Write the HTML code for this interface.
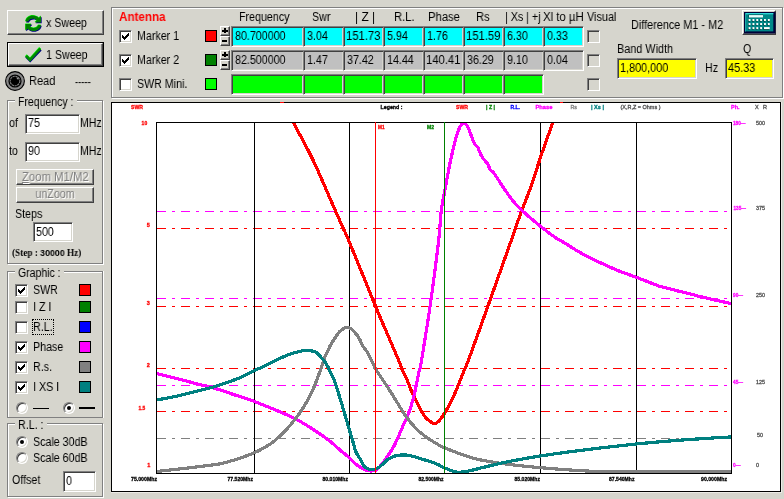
<!DOCTYPE html>
<html><head><meta charset="utf-8"><title>Antenna Analyzer</title>
<style>
html,body{margin:0;padding:0}
body{width:784px;height:499px;overflow:hidden;background:#d6d5cd;position:relative;
 font-family:"Liberation Sans",sans-serif;font-size:12px;color:#000;line-height:12px}
.a{position:absolute;white-space:nowrap}
.t{position:absolute;white-space:nowrap;transform:scaleX(.89);transform-origin:0 0;will-change:transform}
.tc{position:absolute;white-space:nowrap;text-align:center}
.tc span{display:inline-block;transform:scaleX(.89);transform-origin:50% 0;will-change:transform}
.btn{position:absolute;box-sizing:border-box;border:1px solid;border-color:#fff #404040 #404040 #fff;
 box-shadow:inset -1px -1px #808080, inset 1px 1px #d6d5cd;background:#d6d5cd}
.sunk{position:absolute;box-sizing:border-box;border:1px solid;border-color:#808080 #fff #fff #808080;
 box-shadow:inset 1px 1px #404040, inset -1px -1px #d6d5cd;background:#fff}
.grp{position:absolute;box-sizing:border-box;border:1px solid #808080;box-shadow:1px 1px #fff, inset 1px 1px #fff}
.gt{position:absolute;background:#d6d5cd;height:12px}
.cb{position:absolute;box-sizing:border-box;width:13px;height:13px;border:1px solid;border-color:#808080 #fff #fff #808080;
 box-shadow:inset 1px 1px #404040, inset -1px -1px #d6d5cd;background:#fff}
.cb.f{background:#d6d5cd}
.cb svg{position:absolute;left:2px;top:2px}
.sq{position:absolute;box-sizing:border-box;width:12px;height:12px;border:1px solid #000}
.rd{position:absolute;box-sizing:border-box;width:12px;height:12px;border-radius:50%;border:1px solid;border-color:#808080 #fff #fff #808080;background:#fff;box-shadow:inset 1px 1px #404040, inset -1px -1px #d6d5cd;transform:rotate(0deg)}
.rd.on:after{content:"";position:absolute;left:3px;top:3px;width:4px;height:4px;border-radius:50%;background:#000}
.cell{position:absolute;box-sizing:border-box;width:41px;height:21px;border:1px solid;border-color:#808080 #fff #fff #808080;
 box-shadow:inset 1px 1px #404040, inset -1px -1px #d6d5cd}
.c1{background:#00ffff}.c2{background:#c0c0c0}.c3{background:#00ff00}
.spin{position:absolute;box-sizing:border-box;width:10px;height:10px;border:1px solid;border-color:#fff #404040 #404040 #fff;background:#d6d5cd;box-shadow:inset -1px -1px #808080}
.spin i{position:absolute;background:#000}
</style></head><body>

<div class="btn" style="left:7px;top:10px;width:97px;height:25px"></div>
<svg class="a" style="left:25px;top:15px" width="18" height="18" viewBox="0 0 18 18"><g transform="translate(0.7,0.8)" fill="#000080"><path d="M0.5,6.6 C1,3 4,0.6 8,0.6 C10.4,0.6 12.4,1.5 13.8,2.9 L16,1.1 L16,7.5 L9.9,7.5 L11.8,5.3 C10.8,4.3 9.5,3.6 8,3.6 C5.6,3.6 3.9,4.8 3.3,6.6 Z"/><path transform="rotate(180 8.25 8.25)" d="M0.5,6.6 C1,3 4,0.6 8,0.6 C10.4,0.6 12.4,1.5 13.8,2.9 L16,1.1 L16,7.5 L9.9,7.5 L11.8,5.3 C10.8,4.3 9.5,3.6 8,3.6 C5.6,3.6 3.9,4.8 3.3,6.6 Z"/></g><g transform="translate(-0.3,-0.5)" fill="#00ff00"><path d="M0.5,6.6 C1,3 4,0.6 8,0.6 C10.4,0.6 12.4,1.5 13.8,2.9 L16,1.1 L16,7.5 L9.9,7.5 L11.8,5.3 C10.8,4.3 9.5,3.6 8,3.6 C5.6,3.6 3.9,4.8 3.3,6.6 Z"/><path transform="rotate(180 8.25 8.25)" d="M0.5,6.6 C1,3 4,0.6 8,0.6 C10.4,0.6 12.4,1.5 13.8,2.9 L16,1.1 L16,7.5 L9.9,7.5 L11.8,5.3 C10.8,4.3 9.5,3.6 8,3.6 C5.6,3.6 3.9,4.8 3.3,6.6 Z"/></g><g fill="#008000"><path d="M0.5,6.6 C1,3 4,0.6 8,0.6 C10.4,0.6 12.4,1.5 13.8,2.9 L16,1.1 L16,7.5 L9.9,7.5 L11.8,5.3 C10.8,4.3 9.5,3.6 8,3.6 C5.6,3.6 3.9,4.8 3.3,6.6 Z"/><path transform="rotate(180 8.25 8.25)" d="M0.5,6.6 C1,3 4,0.6 8,0.6 C10.4,0.6 12.4,1.5 13.8,2.9 L16,1.1 L16,7.5 L9.9,7.5 L11.8,5.3 C10.8,4.3 9.5,3.6 8,3.6 C5.6,3.6 3.9,4.8 3.3,6.6 Z"/></g></svg>
<div class="t" style="left:46.2px;top:17px;">x Sweep</div>
<div class="a" style="left:7px;top:42px;width:97px;height:25px;box-sizing:border-box;border:1px solid #000"></div>
<div class="btn" style="left:8px;top:43px;width:95px;height:23px"></div>
<svg class="a" style="left:23px;top:45px" width="20" height="19" viewBox="0 0 20 19" fill="none" stroke-linejoin="miter"><path d="M3.4,11.4 L7.2,15.3 L17.5,4.5" stroke="#000080" stroke-width="3.2"/><path d="M2.8,10.3 L6.9,14.3 L17.1,2.9" stroke="#00ff00" stroke-width="2.6"/><path d="M3.1,10.9 L7,14.8 L17.3,3.5" stroke="#008800" stroke-width="2.5"/></svg>
<div class="t" style="left:46.2px;top:49px;">1 Sweep</div>
<svg class="a" style="left:5px;top:71px" width="20" height="20" viewBox="0 0 20 20"><circle cx="10" cy="10" r="9.4" fill="#888" stroke="#000" stroke-width="1.1"/><circle cx="10" cy="10" r="6.6" fill="#000"/><circle cx="10" cy="10" r="4.8" fill="#000" stroke="#808080" stroke-width="1.1" stroke-dasharray="2.2,0.6"/><ellipse cx="12.6" cy="7.4" rx="1.3" ry="0.7" transform="rotate(40 12.6 7.4)" fill="#999"/></svg>
<div class="t" style="left:28.7px;top:75px;transform:scaleX(0.92);">Read</div>
<div class="t" style="left:74.5px;top:76px;transform:scaleX(0.78);">-----</div>
<div class="grp" style="left:7px;top:100px;width:96px;height:164px"></div>
<div class="gt" style="left:15px;top:95px;width:62px"></div>
<div class="t" style="left:18.2px;top:96px;transform:scaleX(0.875);">Frequency :</div>
<div class="t" style="left:9.2px;top:117px;">of</div>
<div class="sunk" style="left:25px;top:114px;width:55px;height:20px"></div>
<div class="t" style="left:28.2px;top:117px;">75</div>
<div class="t" style="left:79.9px;top:117px;transform:scaleX(0.875);">MHz</div>
<div class="t" style="left:9.2px;top:145px;">to</div>
<div class="sunk" style="left:25px;top:142px;width:55px;height:20px"></div>
<div class="t" style="left:28.2px;top:145px;">90</div>
<div class="t" style="left:79.9px;top:145px;transform:scaleX(0.875);">MHz</div>
<div class="btn" style="left:16px;top:169px;width:78px;height:16px"></div>
<div class="tc" style="left:16px;width:78px;top:172px;color:#fff;margin-left:1px"><span style="transform:scaleX(0.945)"><u>Z</u>oom M1/M2</span></div>
<div class="tc" style="left:16px;width:78px;top:171px;color:#808080"><span style="transform:scaleX(0.945)"><u>Z</u>oom M1/M2</span></div>
<div class="btn" style="left:16px;top:187px;width:78px;height:16px"></div>
<div class="tc" style="left:16px;width:78px;top:189px;color:#fff;margin-left:1px"><span>unZoom</span></div>
<div class="tc" style="left:16px;width:78px;top:188px;color:#808080"><span>unZoom</span></div>
<div class="t" style="left:14.7px;top:208px;">Steps</div>
<div class="sunk" style="left:33px;top:222px;width:40px;height:20px"></div>
<div class="t" style="left:36.2px;top:226px;">500</div>
<div class="t" style="left:11.5px;top:246.5px;font-family:'Liberation Serif',serif;font-weight:bold;font-size:10px;transform:scaleX(.92)">(Step : <span style="font-family:'Liberation Sans',sans-serif;font-size:9.6px">30000</span> Hz)</div>
<div class="grp" style="left:7px;top:271px;width:96px;height:147px;box-shadow:1px 0 #fff, inset 1px 1px #fff"></div>
<div class="gt" style="left:15px;top:266px;width:49px"></div>
<div class="t" style="left:18.2px;top:267px;transform:scaleX(0.875);">Graphic :</div>
<div class="cb" style="left:15px;top:284px"><svg width="7" height="7" viewBox="0 0 7 7" shape-rendering="crispEdges"><path d="M0,2h1v1h1v1h1v-1h1v-1h1v-1h1v-1h1v3h-1v1h-1v1h-1v1h-1v1h-1v-1h-1v-1h-1z" fill="#000"/></svg></div>
<div class="t" style="left:32.7px;top:284px;">SWR</div>
<div class="sq" style="left:79px;top:284px;background:#ff0000"></div>
<div class="cb" style="left:15px;top:301px"></div>
<div class="t" style="left:33.2px;top:301px;">I Z I</div>
<div class="sq" style="left:79px;top:301px;background:#008000"></div>
<div class="cb" style="left:15px;top:321px"></div>
<div class="t" style="left:33.2px;top:321px;">R.L.</div>
<div class="sq" style="left:79px;top:321px;background:#0000ff"></div>
<div class="cb" style="left:15px;top:341px"><svg width="7" height="7" viewBox="0 0 7 7" shape-rendering="crispEdges"><path d="M0,2h1v1h1v1h1v-1h1v-1h1v-1h1v-1h1v3h-1v1h-1v1h-1v1h-1v1h-1v-1h-1v-1h-1z" fill="#000"/></svg></div>
<div class="t" style="left:32.7px;top:341px;">Phase</div>
<div class="sq" style="left:79px;top:341px;background:#ff00ff"></div>
<div class="cb" style="left:15px;top:361px"><svg width="7" height="7" viewBox="0 0 7 7" shape-rendering="crispEdges"><path d="M0,2h1v1h1v1h1v-1h1v-1h1v-1h1v-1h1v3h-1v1h-1v1h-1v1h-1v1h-1v-1h-1v-1h-1z" fill="#000"/></svg></div>
<div class="t" style="left:32.7px;top:361px;">R.s.</div>
<div class="sq" style="left:79px;top:361px;background:#808080"></div>
<div class="cb" style="left:15px;top:381px"><svg width="7" height="7" viewBox="0 0 7 7" shape-rendering="crispEdges"><path d="M0,2h1v1h1v1h1v-1h1v-1h1v-1h1v-1h1v3h-1v1h-1v1h-1v1h-1v1h-1v-1h-1v-1h-1z" fill="#000"/></svg></div>
<div class="t" style="left:33.2px;top:381px;">I XS I</div>
<div class="sq" style="left:79px;top:381px;background:#008080"></div>
<div class="a" style="left:32px;top:319px;width:22px;height:16px;box-sizing:border-box;border:1px dotted #000"></div>
<div class="rd" style="left:16px;top:402px"></div>
<div class="a" style="left:33px;top:408px;width:16px;height:1px;background:#000"></div>
<div class="rd on" style="left:63px;top:402px"></div>
<div class="a" style="left:79px;top:407px;width:16px;height:2px;background:#000"></div>
<div class="grp" style="left:7px;top:423px;width:96px;height:74px"></div>
<div class="gt" style="left:15px;top:418px;width:32px"></div>
<div class="t" style="left:18.2px;top:419px;">R.L. :</div>
<div class="rd on" style="left:16px;top:436px"></div>
<div class="t" style="left:32.7px;top:436px;">Scale 30dB</div>
<div class="rd" style="left:16px;top:452px"></div>
<div class="t" style="left:32.7px;top:452px;">Scale 60dB</div>
<div class="t" style="left:11.7px;top:474px;">Offset</div>
<div class="sunk" style="left:63px;top:471px;width:33px;height:21px"></div>
<div class="t" style="left:66.2px;top:475px;">0</div>
<div class="grp" style="left:111px;top:7px;width:672px;height:91px"></div>
<div class="t" style="left:119px;top:11px;font-weight:bold;color:#ff0000;transform:scaleX(.97)">Antenna</div>
<div class="cb" style="left:119px;top:30px"><svg width="7" height="7" viewBox="0 0 7 7" shape-rendering="crispEdges"><path d="M0,2h1v1h1v1h1v-1h1v-1h1v-1h1v-1h1v3h-1v1h-1v1h-1v1h-1v1h-1v-1h-1v-1h-1z" fill="#000"/></svg></div>
<div class="t" style="left:136.7px;top:30px;">Marker 1</div>
<div class="cb" style="left:119px;top:54px"><svg width="7" height="7" viewBox="0 0 7 7" shape-rendering="crispEdges"><path d="M0,2h1v1h1v1h1v-1h1v-1h1v-1h1v-1h1v3h-1v1h-1v1h-1v1h-1v1h-1v-1h-1v-1h-1z" fill="#000"/></svg></div>
<div class="t" style="left:136.7px;top:54px;">Marker 2</div>
<div class="cb" style="left:119px;top:78px"></div>
<div class="t" style="left:136.7px;top:78px;">SWR Mini.</div>
<div class="sq" style="left:205px;top:30px;background:#ff0000"></div>
<div class="sq" style="left:205px;top:54px;background:#008000"></div>
<div class="sq" style="left:205px;top:78px;background:#00ff00"></div>
<div class="spin" style="left:220px;top:26px"><i style="left:1px;top:3px;width:6px;height:2px"></i><i style="left:3px;top:1px;width:2px;height:5px"></i></div>
<div class="spin" style="left:220px;top:36px"><i style="left:1px;top:3px;width:5px;height:2px"></i></div>
<div class="spin" style="left:220px;top:50px"><i style="left:1px;top:3px;width:6px;height:2px"></i><i style="left:3px;top:1px;width:2px;height:5px"></i></div>
<div class="spin" style="left:220px;top:60px"><i style="left:1px;top:3px;width:5px;height:2px"></i></div>
<div class="t" style="left:238.7px;top:11px;">Frequency</div>
<div class="t" style="left:312.2px;top:11px;">Swr</div>
<div class="t" style="left:354.8px;top:11px;transform:scaleX(1);">| Z |</div>
<div class="t" style="left:393.5px;top:11px;transform:scaleX(0.93);">R.L.</div>
<div class="t" style="left:427.7px;top:11px;transform:scaleX(0.94);">Phase</div>
<div class="t" style="left:475.5px;top:11px;transform:scaleX(0.93);">Rs</div>
<div class="t" style="left:505.2px;top:11px;">| Xs | +j</div>
<div class="t" style="left:543px;top:11px;transform:scaleX(0.95);">Xl to µH</div>
<div class="t" style="left:586.5px;top:11px;transform:scaleX(0.905);">Visual</div>
<div class="cell c1" style="left:231px;top:26px;width:73px"></div>
<div class="t" style="left:234.6px;top:30px;">80.700000</div>
<div class="cell c1" style="left:303px;top:26px"></div>
<div class="t" style="left:306.6px;top:30px;">3.04</div>
<div class="cell c1" style="left:343px;top:26px"></div>
<div class="t" style="left:345.8px;top:30px;transform:scaleX(0.94);">151.73</div>
<div class="cell c1" style="left:383px;top:26px"></div>
<div class="t" style="left:386.6px;top:30px;">5.94</div>
<div class="cell c1" style="left:423px;top:26px"></div>
<div class="t" style="left:426.6px;top:30px;">1.76</div>
<div class="cell c1" style="left:463px;top:26px"></div>
<div class="t" style="left:465.8px;top:30px;transform:scaleX(0.94);">151.59</div>
<div class="cell c1" style="left:503px;top:26px"></div>
<div class="t" style="left:506.6px;top:30px;">6.30</div>
<div class="cell c1" style="left:543px;top:26px"></div>
<div class="t" style="left:546.6px;top:30px;">0.33</div>
<div class="cell c2" style="left:231px;top:50px;width:73px"></div>
<div class="t" style="left:234.6px;top:54px;">82.500000</div>
<div class="cell c2" style="left:303px;top:50px"></div>
<div class="t" style="left:306.6px;top:54px;">1.47</div>
<div class="cell c2" style="left:343px;top:50px"></div>
<div class="t" style="left:346.6px;top:54px;">37.42</div>
<div class="cell c2" style="left:383px;top:50px"></div>
<div class="t" style="left:386.6px;top:54px;">14.44</div>
<div class="cell c2" style="left:423px;top:50px"></div>
<div class="t" style="left:425.8px;top:54px;transform:scaleX(0.94);">140.41</div>
<div class="cell c2" style="left:463px;top:50px"></div>
<div class="t" style="left:466.6px;top:54px;">36.29</div>
<div class="cell c2" style="left:503px;top:50px"></div>
<div class="t" style="left:506.6px;top:54px;">9.10</div>
<div class="cell c2" style="left:543px;top:50px"></div>
<div class="t" style="left:546.6px;top:54px;">0.04</div>
<div class="cell c3" style="left:231px;top:74px;width:73px"></div>
<div class="cell c3" style="left:303px;top:74px"></div>
<div class="cell c3" style="left:343px;top:74px"></div>
<div class="cell c3" style="left:383px;top:74px"></div>
<div class="cell c3" style="left:423px;top:74px"></div>
<div class="cell c3" style="left:463px;top:74px"></div>
<div class="cell c3" style="left:503px;top:74px"></div>
<div class="cb f" style="left:587px;top:30px"></div>
<div class="cb f" style="left:587px;top:54px"></div>
<div class="cb f" style="left:587px;top:78px"></div>
<div class="t" style="left:630.7px;top:19px;transform:scaleX(0.905);">Difference M1 - M2</div>
<div class="btn" style="left:742px;top:10px;width:34px;height:25px"></div>
<svg class="a" style="left:744px;top:12px" width="32" height="22" viewBox="0 0 32 22"><rect x="0" y="0" width="31.5" height="21.5" fill="#000038"/><rect x="1" y="1" width="28.3" height="18.4" fill="#008888"/><rect x="1" y="1" width="28.3" height="1.3" fill="#30d8d8"/><rect x="1" y="1" width="1" height="18.4" fill="#20a8a8"/><rect x="4.4" y="2.6" width="14.6" height="3" fill="#004848"/><rect x="5" y="3.1" width="14" height="2.4" fill="#e8ffff"/><rect x="4.00" y="7.60" width="1.9" height="2" fill="#003838"/><rect x="4.60" y="7.00" width="1.9" height="2" fill="#fff"/><rect x="7.85" y="7.60" width="1.9" height="2" fill="#003838"/><rect x="8.45" y="7.00" width="1.9" height="2" fill="#fff"/><rect x="11.70" y="7.60" width="1.9" height="2" fill="#003838"/><rect x="12.30" y="7.00" width="1.9" height="2" fill="#fff"/><rect x="15.55" y="7.60" width="1.9" height="2" fill="#003838"/><rect x="16.15" y="7.00" width="1.9" height="2" fill="#fff"/><rect x="19.40" y="7.60" width="1.9" height="2" fill="#003838"/><rect x="20.00" y="7.00" width="1.9" height="2" fill="#fff"/><rect x="23.25" y="7.60" width="1.9" height="2" fill="#003838"/><rect x="23.85" y="7.00" width="1.9" height="2" fill="#fff"/><rect x="4.00" y="11.65" width="1.9" height="2" fill="#003838"/><rect x="4.60" y="11.05" width="1.9" height="2" fill="#fff"/><rect x="7.85" y="11.65" width="1.9" height="2" fill="#003838"/><rect x="8.45" y="11.05" width="1.9" height="2" fill="#fff"/><rect x="11.70" y="11.65" width="1.9" height="2" fill="#003838"/><rect x="12.30" y="11.05" width="1.9" height="2" fill="#fff"/><rect x="15.55" y="11.65" width="1.9" height="2" fill="#003838"/><rect x="16.15" y="11.05" width="1.9" height="2" fill="#fff"/><rect x="19.40" y="11.65" width="1.9" height="2" fill="#003838"/><rect x="20.00" y="11.05" width="1.9" height="2" fill="#fff"/><rect x="23.25" y="11.65" width="1.9" height="2" fill="#003838"/><rect x="23.85" y="11.05" width="1.9" height="2" fill="#fff"/><rect x="4.00" y="15.70" width="1.9" height="2" fill="#003838"/><rect x="4.60" y="15.10" width="1.9" height="2" fill="#fff"/><rect x="7.85" y="15.70" width="1.9" height="2" fill="#003838"/><rect x="8.45" y="15.10" width="1.9" height="2" fill="#fff"/><rect x="11.70" y="15.70" width="1.9" height="2" fill="#003838"/><rect x="12.30" y="15.10" width="1.9" height="2" fill="#fff"/><rect x="15.55" y="15.70" width="1.9" height="2" fill="#003838"/><rect x="16.15" y="15.10" width="1.9" height="2" fill="#fff"/><rect x="19.40" y="15.70" width="5.7" height="2" fill="#003838"/><rect x="20.00" y="15.10" width="5.7" height="2" fill="#fff"/></svg>
<div class="t" style="left:617px;top:43px;transform:scaleX(0.905);">Band Width</div>
<div class="t" style="left:742.7px;top:43px;">Q</div>
<div class="sunk" style="left:617px;top:58px;width:80px;height:21px;background:#ffff00"></div>
<div class="t" style="left:620.2px;top:61.5px;transform:scaleX(0.905);">1,800,000</div>
<div class="t" style="left:705.2px;top:61.5px;">Hz</div>
<div class="sunk" style="left:725px;top:58px;width:49px;height:21px;background:#ffff00"></div>
<div class="t" style="left:728.2px;top:61.5px;transform:scaleX(0.91);">45.33</div>
<div class="a" style="left:111px;top:102px;width:671px;height:391px;background:#ecebe6"></div>
<div class="a" style="left:111px;top:102px;width:670px;height:390px;box-sizing:border-box;border:1px solid #000;background:#fff"></div>
<svg class="a" style="left:0;top:0" width="784" height="499" viewBox="0 0 784 499">
<defs><clipPath id="cp"><rect x="157" y="123" width="574" height="350"/></clipPath></defs>
<g shape-rendering="crispEdges" stroke-width="1" fill="none">
<g stroke="#ff00ff" stroke-dasharray="9,6,3,6"><path d="M157,211.5H731 M157,298.5H731 M157,385.5H731"/></g>
<g stroke="#ff0000" stroke-dasharray="9,6,3,6"><path d="M157,228.5H731 M157,306.5H731 M157,368.5H731 M157,411.5H731"/></g>
<g stroke="#808080" stroke-dasharray="9,6,3,6"><path d="M157,438.5H731"/></g>
</g>
<g shape-rendering="crispEdges" stroke-width="1" fill="none">
<rect x="156.5" y="122.5" width="575" height="351" stroke="#000"/>
<path d="M254.5,122V473 M349.5,122V473 M540.5,122V473 M636.5,122V473" stroke="#000"/>
</g>
<g clip-path="url(#cp)" shape-rendering="crispEdges">
<path d="M293.0,122.0 C296.3,128.3 305.9,145.2 313.0,160.0 C320.1,174.8 330.3,199.3 335.5,211.0 C340.7,222.7 341.8,225.2 344.0,230.0 C346.2,234.8 343.2,227.3 348.5,240.0 C353.8,252.7 369.1,290.6 375.6,306.4 C382.1,322.2 383.9,326.1 387.8,335.0 C391.6,343.9 396.1,354.2 398.5,360.0 C400.9,365.8 400.9,366.9 402.2,370.0 C403.6,373.1 405.1,375.4 406.6,378.8 C408.1,382.1 409.6,386.7 411.0,390.0 C412.4,393.3 413.8,395.8 415.2,398.8 C416.6,401.7 418.2,405.0 419.5,407.5 C420.8,410.0 422.0,412.0 423.1,413.8 C424.2,415.5 425.1,416.9 426.2,418.1 C427.4,419.4 429.0,420.4 430.0,421.2 C431.0,422.1 431.8,422.7 432.5,423.0 C433.2,423.3 433.8,423.3 434.4,423.3 C435.0,423.3 435.4,423.4 436.2,423.0 C437.1,422.6 438.4,421.7 439.4,420.6 C440.4,419.5 441.4,417.8 442.3,416.5 C443.2,415.2 443.5,414.8 444.6,413.0 C445.7,411.2 447.4,408.7 448.8,406.0 C450.2,403.3 451.9,400.1 453.3,397.0 C454.7,393.9 456.0,390.6 457.3,387.5 C458.6,384.4 459.8,381.6 461.0,378.5 C462.2,375.4 463.4,372.1 464.6,369.0 C465.9,365.9 464.2,371.5 468.5,360.0 C472.8,348.5 483.0,320.0 490.1,300.0 C497.2,280.0 506.2,254.8 511.4,240.0 C516.6,225.2 518.0,220.7 521.4,211.5 C524.8,202.3 528.1,194.8 531.5,185.0 C534.9,175.2 538.4,163.5 542.0,153.0 C545.6,142.5 551.2,127.2 553.0,122.0" fill="none" stroke="#ff0000" stroke-width="3.2" stroke-linejoin="round" stroke-linecap="round"/>
<path d="M156.5,373.6 C159.8,374.4 169.7,376.7 176.4,378.4 C183.1,380.1 190.7,382.2 196.8,383.8 C202.9,385.4 206.6,385.9 213.1,387.8 C219.6,389.7 228.7,392.9 235.6,395.2 C242.5,397.5 244.5,397.6 254.5,401.5 C264.5,405.4 283.6,412.9 295.4,418.9 C307.2,424.9 318.0,432.5 325.4,437.7 C332.8,442.9 336.3,446.9 340.0,450.0 C343.7,453.1 344.8,453.9 347.5,456.2 C350.2,458.6 353.3,462.1 356.2,464.4 C359.2,466.7 362.5,468.9 365.0,470.0 C367.5,471.1 369.4,470.9 371.2,470.9 C373.1,470.9 374.6,471.0 376.2,470.0 C377.9,469.0 379.6,467.0 381.2,465.0 C382.9,463.0 384.4,460.8 386.2,458.1 C388.1,455.4 390.6,452.0 392.5,448.8 C394.4,445.5 396.0,441.9 397.5,438.8 C399.0,435.6 400.0,432.9 401.2,430.0 C402.5,427.1 403.9,423.8 405.0,421.2 C406.1,418.8 406.9,417.5 407.9,415.0 C408.9,412.5 410.0,409.6 411.0,406.2 C412.0,402.9 413.2,398.8 414.1,395.0 C415.0,391.2 415.8,387.7 416.6,383.8 C417.4,379.8 418.3,375.2 419.1,371.2 C419.9,367.3 419.6,372.1 421.6,360.0 C423.6,347.9 428.4,318.4 431.2,298.4 C434.0,278.4 437.0,254.6 438.7,240.0 C440.4,225.4 440.3,218.5 441.2,211.0 C442.1,203.5 443.1,200.3 444.0,195.0 C444.9,189.7 445.9,184.6 446.9,179.2 C447.9,173.9 449.0,168.0 450.0,163.0 C451.0,158.0 452.1,153.6 453.1,149.2 C454.1,144.9 455.2,140.3 456.2,136.8 C457.3,133.2 458.5,130.1 459.4,128.0 C460.3,125.9 461.2,124.8 461.9,124.0 C462.6,123.2 462.7,122.8 463.5,123.0 C464.3,123.2 465.9,124.2 466.9,125.5 C467.9,126.8 468.5,128.2 469.4,130.5 C470.3,132.8 471.6,137.0 472.5,139.2 C473.4,141.5 474.1,142.8 475.0,144.2 C475.9,145.7 477.2,146.3 478.1,148.0 C479.0,149.7 479.8,152.5 480.6,154.2 C481.4,156.0 482.0,157.0 483.1,158.6 C484.2,160.2 486.4,161.8 487.5,163.6 C488.6,165.4 489.0,167.7 490.0,169.2 C491.0,170.8 492.5,171.4 493.8,173.0 C495.0,174.6 494.6,174.3 497.5,178.6 C500.4,182.9 507.4,193.8 511.4,199.0 C515.4,204.2 516.3,205.2 521.4,210.0 C526.5,214.8 536.2,222.8 542.0,227.5 C547.8,232.2 552.0,235.3 556.0,238.0 C560.0,240.7 562.8,241.7 566.2,243.8 C569.6,245.9 573.0,248.4 576.4,250.4 C579.8,252.4 583.2,254.2 586.6,256.0 C590.0,257.8 593.4,259.5 596.8,261.1 C600.2,262.7 603.6,264.2 607.0,265.7 C610.4,267.2 613.8,268.9 617.2,270.3 C620.6,271.7 624.2,272.9 627.4,274.1 C630.6,275.3 633.1,276.0 636.5,277.3 C639.9,278.6 644.1,280.3 648.0,281.8 C651.9,283.3 656.3,285.2 660.0,286.4 C663.7,287.6 666.7,288.0 670.0,288.9 C673.3,289.8 676.7,290.7 680.0,291.5 C683.3,292.3 686.8,293.0 690.0,293.8 C693.2,294.6 695.3,295.4 699.0,296.3 C702.7,297.2 707.0,298.2 712.4,299.4 C717.8,300.6 728.1,302.9 731.2,303.6" fill="none" stroke="#ff00ff" stroke-width="3.2" stroke-linejoin="round" stroke-linecap="round"/>
<path d="M156.5,471.5 C163.8,470.7 188.6,468.0 200.0,466.5 C211.4,465.0 216.1,465.0 225.2,462.7 C234.3,460.4 246.2,456.4 254.5,452.7 C262.9,448.9 268.5,445.8 275.3,440.2 C282.1,434.6 289.5,426.4 295.4,418.9 C301.2,411.4 306.3,402.9 310.4,395.0 C314.5,387.1 317.8,377.1 320.0,371.3 C322.2,365.5 322.5,363.3 323.8,360.0 C325.0,356.7 326.2,354.0 327.5,351.3 C328.8,348.6 329.8,346.3 331.2,343.8 C332.7,341.2 334.8,338.3 336.2,336.2 C337.7,334.2 338.8,332.5 340.0,331.2 C341.2,330.0 342.6,329.1 343.8,328.5 C344.9,327.9 345.6,327.5 346.9,327.5 C348.1,327.5 349.9,327.9 351.2,328.8 C352.6,329.6 353.6,330.8 355.0,332.5 C356.4,334.2 358.1,336.6 359.4,338.8 C360.6,340.9 361.1,343.3 362.5,345.6 C363.9,347.9 365.8,349.7 367.5,352.5 C369.2,355.3 371.0,359.6 372.5,362.5 C374.0,365.4 373.1,365.0 376.2,370.0 C379.4,375.0 386.3,385.1 391.1,392.6 C395.9,400.1 401.0,409.2 405.0,415.0 C409.0,420.8 411.7,424.0 415.0,427.5 C418.3,431.0 421.2,433.4 425.0,436.2 C428.8,439.1 434.6,442.5 437.8,444.4 C440.9,446.3 438.6,445.5 444.2,447.7 C449.8,449.9 462.6,455.2 471.3,457.7 C480.0,460.2 488.0,461.3 496.4,462.7 C504.8,464.1 513.8,464.9 521.4,465.8 C529.0,466.7 534.4,467.1 542.0,467.8 C549.6,468.5 558.7,469.2 567.0,469.8 C575.3,470.4 583.7,470.9 592.0,471.3 C600.3,471.7 593.8,471.9 617.0,472.0 C640.2,472.1 712.0,472.0 731.0,472.0" fill="none" stroke="#808080" stroke-width="3.2" stroke-linejoin="round" stroke-linecap="round"/>
<path d="M156.5,400.0 C159.8,399.4 169.7,397.7 176.4,396.2 C183.1,394.7 190.7,392.6 196.8,391.1 C202.9,389.6 206.6,389.0 213.1,387.0 C219.6,385.0 230.5,381.4 236.0,379.3 C241.5,377.2 243.1,376.1 246.2,374.7 C249.3,373.2 251.0,372.2 254.4,370.6 C257.8,369.0 262.9,366.8 266.6,365.0 C270.3,363.2 273.4,361.5 276.8,359.9 C280.2,358.3 283.6,356.6 287.0,355.3 C290.4,354.0 294.1,352.8 297.2,352.0 C300.3,351.2 302.3,350.5 305.4,350.5 C308.5,350.5 313.0,350.8 315.6,352.0 C318.2,353.2 319.5,355.5 321.2,357.5 C323.0,359.5 324.8,361.5 326.2,363.8 C327.7,366.0 328.5,367.9 330.0,371.2 C331.5,374.6 333.0,376.5 335.5,383.8 C338.0,391.1 342.7,407.3 345.0,415.0 C347.3,422.7 348.1,425.8 349.4,430.0 C350.6,434.2 351.5,436.5 352.5,440.0 C353.5,443.5 354.4,448.1 355.6,451.2 C356.9,454.4 358.6,456.4 360.0,458.8 C361.4,461.1 362.4,463.9 363.8,465.6 C365.1,467.3 366.4,468.1 368.1,468.8 C369.8,469.4 372.0,469.6 373.8,469.4 C375.5,469.2 377.1,468.6 378.8,467.5 C380.4,466.4 382.1,464.6 383.8,463.1 C385.4,461.6 386.9,459.9 388.8,458.8 C390.6,457.6 392.9,456.6 395.0,456.0 C397.1,455.4 399.2,455.1 401.2,455.0 C403.3,454.9 405.2,454.9 407.5,455.2 C409.8,455.6 412.1,456.1 415.0,456.9 C417.9,457.7 421.2,458.8 425.0,460.0 C428.8,461.2 434.6,463.1 437.8,464.4 C440.9,465.7 441.1,466.5 444.2,467.8 C447.3,469.1 452.6,471.4 456.3,472.0 C460.0,472.6 461.7,472.3 466.3,471.5 C470.9,470.7 476.7,469.0 483.8,467.3 C490.9,465.6 499.2,463.4 508.9,461.5 C518.6,459.6 528.1,457.8 542.0,455.7 C555.9,453.6 576.2,450.9 592.0,449.0 C607.8,447.1 621.8,445.5 636.5,444.0 C651.2,442.5 664.2,441.4 680.0,440.2 C695.8,439.0 722.7,437.4 731.2,436.9" fill="none" stroke="#008080" stroke-width="3.2" stroke-linejoin="round" stroke-linecap="round"/>

</g>
<g shape-rendering="crispEdges" stroke-width="1" fill="none">
<path d="M375.5,122V473" stroke="#ff0000"/>
<path d="M444.5,122V473" stroke="#008000"/>
</g>
<g stroke-width="0.3" font-family="Liberation Sans, sans-serif" font-size="5.5" font-weight="bold" lengthAdjust="spacingAndGlyphs">
<text x="131" y="109" fill="#ff0000" stroke="#ff0000" textLength="12" lengthAdjust="spacingAndGlyphs">SWR</text>
<text x="380.5" y="109" fill="#000" stroke="#000" textLength="22" lengthAdjust="spacingAndGlyphs">Legend :</text>
<text x="456" y="109" fill="#ff0000" stroke="#ff0000" textLength="12" lengthAdjust="spacingAndGlyphs">SWR</text>
<text x="486" y="109" fill="#008000" stroke="#008000" textLength="9" lengthAdjust="spacingAndGlyphs">| Z |</text>
<text x="510.5" y="109" fill="#0000ff" stroke="#0000ff" textLength="9.5" lengthAdjust="spacingAndGlyphs">R.L.</text>
<text x="535.5" y="109" fill="#ff00ff" stroke="#ff00ff" textLength="17" lengthAdjust="spacingAndGlyphs">Phase</text>
<text x="570.5" y="109" fill="#808080" stroke="#808080" font-weight="normal" textLength="6.5" lengthAdjust="spacingAndGlyphs">Rs</text>
<text x="591" y="109" fill="#008080" stroke="#008080" textLength="13" lengthAdjust="spacingAndGlyphs">| Xs |</text>
<text x="620.5" y="109" fill="#505050" stroke="#505050" font-weight="normal" textLength="40" lengthAdjust="spacingAndGlyphs">(X,R,Z = Ohms )</text>
<text x="731" y="109" fill="#ff00ff" stroke="#ff00ff" textLength="8.5" lengthAdjust="spacingAndGlyphs">Ph.</text>
<text x="755" y="109" fill="#505050" stroke="#505050" font-weight="normal">X</text>
<text x="763" y="109" fill="#505050" stroke="#505050" font-weight="normal">R</text>
<g fill="#ff0000" stroke="#ff0000" >
<text x="141.6" y="125" textLength="5.6" lengthAdjust="spacingAndGlyphs">10</text>
<text x="146.7" y="227">5</text>
<text x="146.7" y="305">3</text>
<text x="146.7" y="367">2</text>
<text x="138.5" y="410" textLength="6.8" lengthAdjust="spacingAndGlyphs">1.5</text>
<text x="147.2" y="467">1</text>
</g>
<text x="378" y="129" fill="#ff0000" stroke="#ff0000" textLength="6.5" lengthAdjust="spacingAndGlyphs">M1</text>
<text x="427" y="129" fill="#008000" stroke="#008000" textLength="7" lengthAdjust="spacingAndGlyphs">M2</text>
<g fill="#ff00ff" stroke="#ff00ff">
<text x="733" y="125" textLength="12.5" lengthAdjust="spacingAndGlyphs">180—</text>
<text x="733.5" y="210" textLength="12.5" lengthAdjust="spacingAndGlyphs">135—</text>
<text x="733" y="297" textLength="10" lengthAdjust="spacingAndGlyphs">90—</text>
<text x="733" y="384" textLength="10" lengthAdjust="spacingAndGlyphs">45—</text>
<text x="733" y="467" textLength="7.5" lengthAdjust="spacingAndGlyphs">0—</text>
</g>
<g fill="#505050" stroke="#505050" font-weight="normal">
<text x="756" y="125" textLength="9" lengthAdjust="spacingAndGlyphs">500</text>
<text x="756" y="210" textLength="9" lengthAdjust="spacingAndGlyphs">375</text>
<text x="756" y="297" textLength="9" lengthAdjust="spacingAndGlyphs">250</text>
<text x="756" y="384" textLength="9" lengthAdjust="spacingAndGlyphs">125</text>
<text x="757" y="437" textLength="6" lengthAdjust="spacingAndGlyphs">50</text>
<text x="756" y="467">0</text>
</g>
<g fill="#000" stroke="#000">
<text x="131" y="481" textLength="26" lengthAdjust="spacingAndGlyphs">75.000Mhz</text>
<text x="227.5" y="481" textLength="25.5" lengthAdjust="spacingAndGlyphs">77.520Mhz</text>
<text x="322.5" y="481" textLength="25.5" lengthAdjust="spacingAndGlyphs">80.010Mhz</text>
<text x="418.5" y="481" textLength="25" lengthAdjust="spacingAndGlyphs">82.500Mhz</text>
<text x="514.5" y="481" textLength="25.5" lengthAdjust="spacingAndGlyphs">85.020Mhz</text>
<text x="609" y="481" textLength="25.5" lengthAdjust="spacingAndGlyphs">87.540Mhz</text>
<text x="701" y="481" textLength="26" lengthAdjust="spacingAndGlyphs">90.000Mhz</text>
</g>
</g>
<rect x="280" y="102" width="4" height="1" fill="#ff0000"/><rect x="560" y="102" width="3" height="1" fill="#ff0000"/>
</svg>
</body></html>
